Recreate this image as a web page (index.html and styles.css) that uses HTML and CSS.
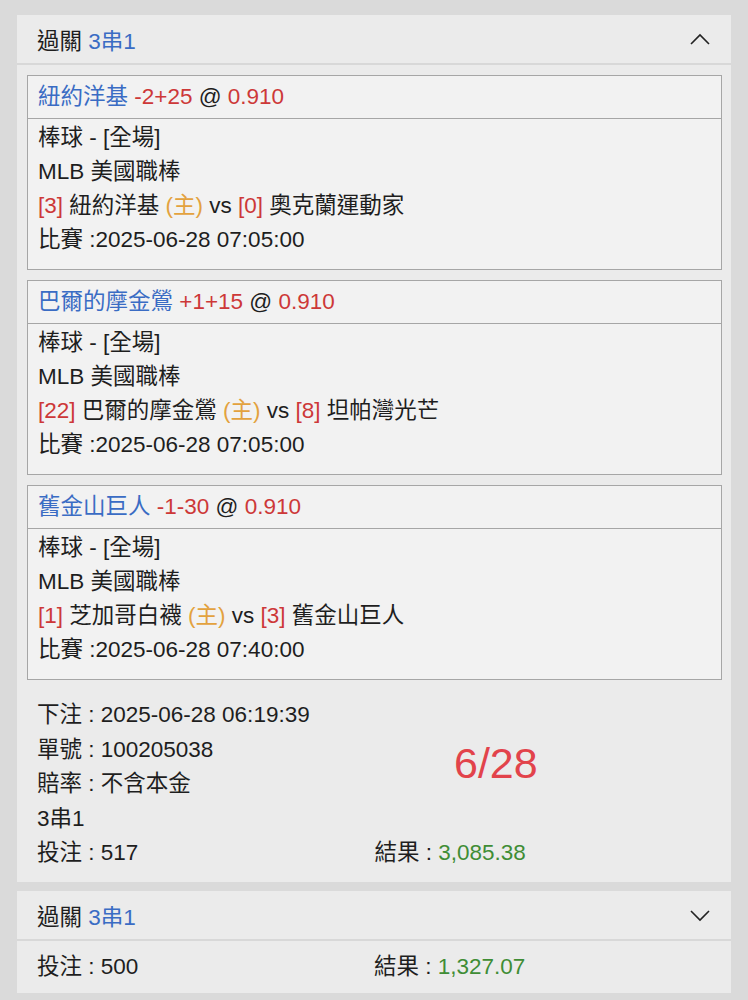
FILE: index.html
```html
<!DOCTYPE html>
<html lang="zh-Hant">
    <head>
        <meta charset="UTF-8" />
        <meta name="viewport" content="width=device-width, initial-scale=1.0" />
        <title>過關</title>
        <link rel="stylesheet" href="styles.css">
    </head>
    <body>
        <div class="bet-card">
            <div class="bet-header">
                <span>過關 <span class="blue">3串1</span></span>
                <svg class="chevron" width="22" height="14" viewBox="0 0 22 14">
                    <polyline points="2,12 11,3 20,12" fill="none" stroke="#222" stroke-width="1.6" />
                </svg>
            </div>
            <div class="bet-body">
                <div class="leg">
                    <div class="leg-title"><span class="blue">紐約洋基</span> <span class="red">-2+25</span> @ <span class="red">0.910</span></div>
                    <div class="leg-info">
                        <div>棒球 - [全場]</div>
                        <div>MLB 美國職棒</div>
                        <div><span class="red">[3]</span> 紐約洋基 <span class="orange">(主)</span> vs <span class="red">[0]</span> 奧克蘭運動家</div>
                        <div>比賽 :2025-06-28 07:05:00</div>
                    </div>
                </div>
                <div class="leg">
                    <div class="leg-title"><span class="blue">巴爾的摩金鶯</span> <span class="red">+1+15</span> @ <span class="red">0.910</span></div>
                    <div class="leg-info">
                        <div>棒球 - [全場]</div>
                        <div>MLB 美國職棒</div>
                        <div><span class="red">[22]</span> 巴爾的摩金鶯 <span class="orange">(主)</span> vs <span class="red">[8]</span> 坦帕灣光芒</div>
                        <div>比賽 :2025-06-28 07:05:00</div>
                    </div>
                </div>
                <div class="leg">
                    <div class="leg-title"><span class="blue">舊金山巨人</span> <span class="red">-1-30</span> @ <span class="red">0.910</span></div>
                    <div class="leg-info">
                        <div>棒球 - [全場]</div>
                        <div>MLB 美國職棒</div>
                        <div><span class="red">[1]</span> 芝加哥白襪 <span class="orange">(主)</span> vs <span class="red">[3]</span> 舊金山巨人</div>
                        <div>比賽 :2025-06-28 07:40:00</div>
                    </div>
                </div>
                <div class="summary">
                    <div class="full">下注 : 2025-06-28 06:19:39</div>
                    <div class="full">單號 : 100205038</div>
                    <div class="full">賠率 : 不含本金</div>
                    <div class="full">3串1</div>
                    <div>投注 : 517</div>
                    <div>結果 : <span class="green">3,085.38</span></div>
                    <div class="stamp">6/28</div>
                </div>
            </div>
        </div>

        <div class="bet-card">
            <div class="bet-header">
                <span>過關 <span class="blue">3串1</span></span>
                <svg class="chevron" width="22" height="14" viewBox="0 0 22 14">
                    <polyline points="2,3 11,12 20,3" fill="none" stroke="#222" stroke-width="1.6" />
                </svg>
            </div>
            <div class="bet-body short">
                <div class="summary">
                    <div>投注 : 500</div>
                    <div>結果 : <span class="green">1,327.07</span></div>
                </div>
            </div>
        </div>
    </body>
</html>
```

FILE: styles.css
```css
html {
    font-family: "Liberation Sans", Arial, "Noto Sans CJK TC", sans-serif;
}

body {
    margin: 0;
    padding: 15px 17px 0;
    background: #dadada;
    color: #1e1e1e;
    font-size: 22.5px;
}

.blue {
    color: #3a6cc4;
}

.red {
    color: #cd3838;
}

.orange {
    color: #e3a23e;
}

.green {
    color: #3f8d35;
}

.bet-card {
    background: #ebebeb;
    margin-bottom: 9px;
}

.bet-header {
    display: flex;
    justify-content: space-between;
    align-items: center;
    height: 48px;
    padding: 0 20px;
    border-bottom: 2px solid #d8d8d8;
}

.bet-body {
    padding: 10px 9px 11px 10px;
}

.bet-body.short {
    padding: 9px 10px;
}

.leg {
    background: #f2f2f2;
    border: 1px solid #a6a6a6;
    margin-bottom: 10px;
}

.leg-title {
    height: 42px;
    line-height: 42px;
    padding: 0 10px;
    border-bottom: 1px solid #a6a6a6;
}

.leg-info {
    padding: 2px 10px 12px;
    line-height: 34px;
}

.summary {
    position: relative;
    display: grid;
    grid-template-columns: 1fr 1fr;
    padding: 8px 10px 0;
    line-height: 34.5px;
}

.bet-body.short .summary {
    padding-top: 0;
}

.summary .full {
    grid-column: 1 / 3;
}

.stamp {
    position: absolute;
    left: 427px;
    top: 48px;
    font-size: 43px;
    line-height: 50px;
    color: #e2434b;
}
```
